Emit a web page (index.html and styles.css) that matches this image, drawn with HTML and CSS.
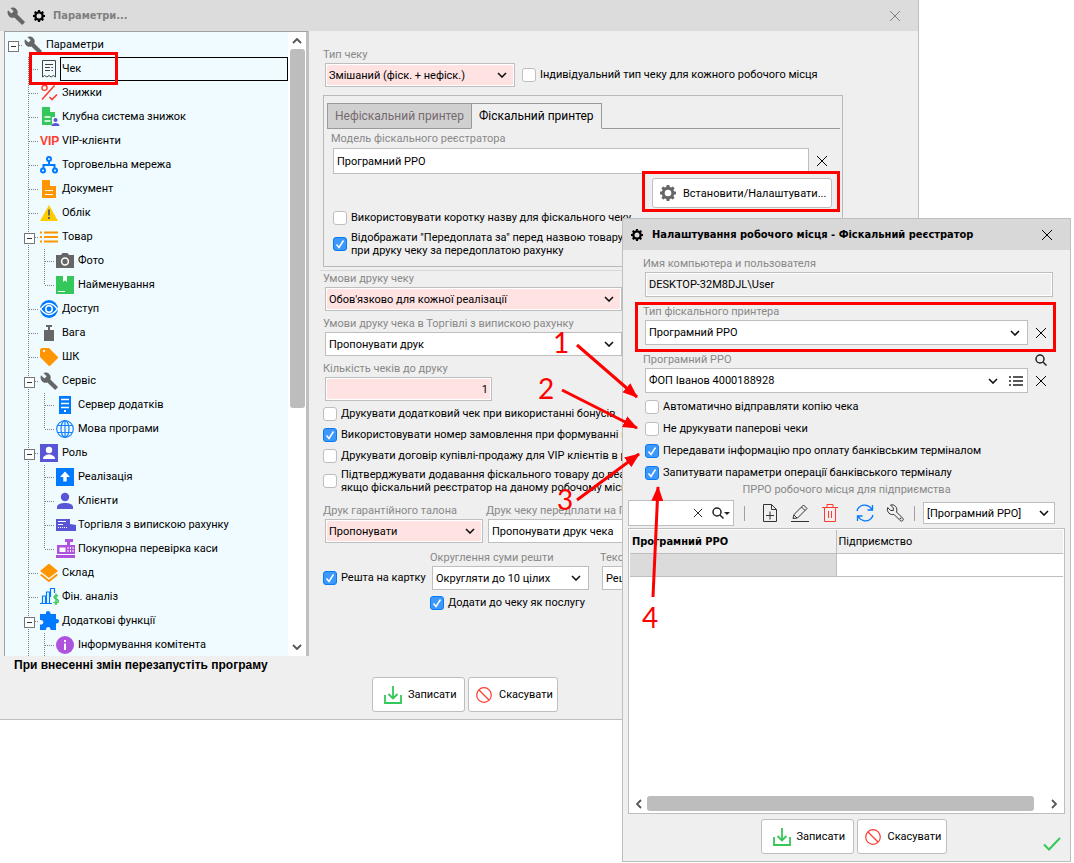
FILE: index.html
```html
<!DOCTYPE html>
<html lang="uk">
<head>
  <meta charset="UTF-8" />
  <title>Параметри</title>
  <meta name="viewport" content="width=device-width, initial-scale=1.0" />
  <link rel="stylesheet" href="styles.css">
</head>
<body>

  <!-- Icon sprite -->
  <svg class="sprite" aria-hidden="true">
    <symbol id="i-wrench" viewBox="0 0 18 18"><path d="M17.5 14.6 10.4 7.5C11.1 5.600 10.700 3.500 9.200 2 7.600.4 5.300.1 3.400 1l3.300 3.300-2.300 2.300L1 3.300C.1 5.200.5 7.600 2 9.200c1.500 1.500 3.600 1.900 5.400 1.200l7.200 7.200c.3.3.8.3 1.100 0l1.800-1.800c.4-.3.4-.9 0-1.200z" fill="#666"/></symbol>
    <symbol id="i-gear" viewBox="0 0 24 24"><path fill-rule="evenodd" d="M10 0h4l.6 3 2 .9L19.200 2.200l2.700 2.700-1.700 2.500.8 2 3 .6v4l-3 .6-.8 2 1.700 2.500-2.700 2.700-2.600-1.700-2 .9-.6 3h-4l-.6-3-2-.9-2.600 1.700-2.700-2.700 1.700-2.500-.8-2-3-.6v-4l3-.6.8-2-1.700-2.500 2.700-2.700 2.600 1.700 2-.9zM12 7a5 5 0 1 0 0 10 5 5 0 0 0 0-10z" fill="currentColor"/></symbol>
    <symbol id="i-close" viewBox="0 0 12 12"><path d="M1 1l10 10M11 1L1 11" stroke="currentColor" fill="none"/></symbol>
    <symbol id="i-up" viewBox="0 0 10 6"><path d="M1 5l4-4 4 4" stroke="#555" stroke-width="1.800" fill="none"/></symbol>
    <symbol id="i-receipt" viewBox="0 0 18 18"><path d="M2.500 17V.5h13V17l-2.200-1.500L11.200 17 9 15.500 6.800 17l-2.200-1.500zM5 4.500h8M5 7.500h5M11.500 7.500H13M5 10.500h5M11.500 10.500H13" stroke="#444" fill="none"/></symbol>
    <symbol id="i-percent" viewBox="0 0 18 18"><path d="M2 15.500 14.500 1.500M9.500 13l2.500 2.500 5-5" stroke="#ff3b30" stroke-width="1.600" fill="none"/><circle cx="4.500" cy="3.800" r="2.600" stroke="#ff3b30" stroke-width="1.400" fill="none"/></symbol>
    <symbol id="i-club" viewBox="0 0 20 20"><path d="M2 0h8v5h5v5h-3v8H2z" fill="#34c759"/><path d="M4.500 10h6M4.500 14h6" stroke="#fff" stroke-width="1.400"/><circle cx="15.500" cy="13" r="2" fill="#5856d6"/><path d="M11.500 19c0-4 8-4 8 0z" fill="#5856d6"/></symbol>
    <symbol id="i-net" viewBox="0 0 18 18"><g fill="none" stroke="#007aff" stroke-width="2"><path d="M9 5v4M3.500 12V9h11v3"/><circle cx="9" cy="3" r="2"/><circle cx="3" cy="14.500" r="2"/><circle cx="15" cy="14.500" r="2"/></g></symbol>
    <symbol id="i-doc" viewBox="0 0 18 18"><path d="M2 0h8v6h6v12H2z" fill="#ff9500"/><path d="M5 10.500h8M5 14.500h8" stroke="#fff" stroke-width="1.200"/></symbol>
    <symbol id="i-warn" viewBox="0 0 18 18"><path d="M9 1l9 16H0z" fill="#fc0"/><path d="M9 5.500v6M9 13v2" stroke="#666" stroke-width="2"/></symbol>
    <symbol id="i-list" viewBox="0 0 18 18"><path d="M0 4.500h2M0 9h2M0 13.500h2M4 4.500h14M4 9h14M4 13.500h14" stroke="#ff9500" stroke-width="2"/></symbol>
    <symbol id="i-camera" viewBox="0 0 18 18"><path d="M0 3h5l1.500-2h5L13 3h5v13H0z" fill="#666"/><circle cx="9" cy="9.500" r="3.400" fill="none" stroke="#fff" stroke-width="1.500"/></symbol>
    <symbol id="i-box" viewBox="0 0 18 18"><path d="M0 0h18v18H0z" fill="#34c759"/><path d="M7 0h4v6L9 4.500 7 6z" fill="#fff"/><path d="M2 15.500h7" stroke="#fff"/></symbol>
    <symbol id="i-eye" viewBox="0 0 18 18"><circle cx="9" cy="9" r="9" fill="#007aff"/><path d="M.5 9Q9-2 17.500 9 9 20 .5 9z" fill="none" stroke="#fff" stroke-width="1.300"/><circle cx="9" cy="9" r="3.200" fill="none" stroke="#fff" stroke-width="1.500"/></symbol>
    <symbol id="i-weight" viewBox="0 0 18 18"><path d="M6 1h6v2h-2v3h4v11H4V6h4V3H6z" fill="#666"/></symbol>
    <symbol id="i-tag" viewBox="0 0 18 18"><path fill-rule="evenodd" d="M1.500 0H9l9 9c.2.4.2.8 0 1l-8 8c-.4.200-.7.200-1 0L0 9V1.500zM3 2v2h2V2z" fill="#ff9500"/></symbol>
    <symbol id="i-server" viewBox="0 0 18 18"><path d="M3 0h12v18H3z" fill="#007aff"/><path d="M5 3.500h8M5 7.500h8M5 11.500h8" stroke="#fff" stroke-width="1.500"/><path d="M8 14h2v2H8z" fill="#fff"/></symbol>
    <symbol id="i-globe" viewBox="0 0 18 18"><g fill="none" stroke="#1583ff" stroke-width="1.200"><circle cx="9" cy="9" r="8.300"/><ellipse cx="9" cy="9" rx="4" ry="8.300"/><path d="M1.500 5.500h15M1.500 12.500h15M9 1v16"/></g></symbol>
    <symbol id="i-role" viewBox="0 0 18 18"><path d="M0 0h18v18H0z" fill="#5856d6"/><circle cx="9" cy="6" r="3.200" fill="#fff"/><path d="M3 15c0-6 12-6 12 0z" fill="#fff"/></symbol>
    <symbol id="i-sale" viewBox="0 0 18 18"><path d="M0 0h18v18H0z" fill="#007aff"/><path d="M9 3.500 4 9h3.300v4.500h3.400V9H14z" fill="#fff"/></symbol>
    <symbol id="i-client" viewBox="0 0 18 18"><circle cx="9" cy="5" r="4.200" fill="#5856d6"/><path d="M1 17v-2c0-5.500 16-5.500 16 0v2z" fill="#5856d6"/></symbol>
    <symbol id="i-invoice" viewBox="0 0 20 18"><path d="M0 3h14v5l6 1v6H0z" fill="#5856d6"/><path d="M2 5.500h8M2 8.500h5" stroke="#fff"/><path d="M2 11.500h10" stroke="#fff" stroke-dasharray="1 1"/></symbol>
    <symbol id="i-cash" viewBox="0 0 20 20"><path d="M9 0h8v3h-3v3h5v9H1V6h10V3H9zM0 16h19v3H0z" fill="#af52de"/><path d="M3.500 8.500h6v4.500h-6z" fill="#fff"/><path d="M12 8v5M14.500 8v5M17 8v5" stroke="#fff" stroke-dasharray="2 1"/></symbol>
    <symbol id="i-layers" viewBox="0 0 18 18"><path d="M9-.5 18 7l-9 7-9-7z" fill="#ff9500"/><path d="M.7 10.500 9 17l8.300-6.500" stroke="#ff9500" stroke-width="2" fill="none"/></symbol>
    <symbol id="i-chart" viewBox="0 0 20 20"><path d="M0 16.500h12M2.500 16V9h3v7M6.500 16V5h3v11M10.500 10V1.500h4V6" stroke="#007aff" fill="none" stroke-width="1.200"/><path d="M18 9.200c-1-1-4-1-4 1s4.500 1.600 4.500 3.800-3.500 2.400-5 1M16 6.500v11.500" stroke="#34c759" fill="none" stroke-width="1.400"/></symbol>
    <symbol id="i-puzzle" viewBox="0 0 20 20"><path d="M0 3h6c-1-4 5-4 4.500 0H16v5c4-.5 4 4.500 0 4.500V19h-5.500c.5-4-5-4-4.500 0H0v-5.500c4.500 1 4.500-5.500 0-4.500z" fill="#007aff"/></symbol>
    <symbol id="i-info" viewBox="0 0 18 18"><circle cx="9" cy="9" r="9" fill="#af52de"/><path d="M9 4v2M9 7.500V14" stroke="#fff" stroke-width="2"/></symbol>
    <symbol id="i-save" viewBox="0 0 18 18"><path d="M1 9v8h16V9M9 0v12M4.500 8 9 12.500 13.500 8" stroke="#34c759" stroke-width="1.800" fill="none"/></symbol>
    <symbol id="i-cancel" viewBox="0 0 16 16"><circle cx="8" cy="8" r="7.300" fill="none" stroke="#ff3b30" stroke-width="1.200"/><path d="M3 3l10 10" stroke="#ff3b30" stroke-width="1.200"/></symbol>
    <symbol id="i-search" viewBox="0 0 12 12"><circle cx="5" cy="5" r="4" fill="none" stroke="#222" stroke-width="1.500"/><path d="M8 8l3.500 3.500" stroke="#222" stroke-width="1.500"/></symbol>
    <symbol id="i-bullets" viewBox="0 0 14 10"><path d="M0 1h2M0 5h2M0 9h2M4 1h10M4 5h10M4 9h10" stroke="#222" stroke-width="1.500"/></symbol>
    <symbol id="i-add" viewBox="0 0 18 18"><path d="M2.500.5h8l5 5v12h-13zM10.500.5v5h5M5 11.500h8M9 7.500v8" stroke="#333" fill="none"/></symbol>
    <symbol id="i-edit" viewBox="0 0 18 18"><path d="M0 17.500h18M2 14.500l1-4L12.500 1 16 4.500 6.500 14zM10.500 3 14 6.500M3 11l3 3" stroke="#333" fill="none"/></symbol>
    <symbol id="i-trash" viewBox="0 0 18 18"><path d="M1 3.500h16M6 3V.5h6V3M3.500 4v13.500h11V4M7.500 7v7M10.500 7v7" stroke="#ff3b30" fill="none"/></symbol>
    <symbol id="i-sync" viewBox="0 0 18 18"><path d="M1 7C2 2.500 6 .7 9.500 1.200c3 .5 5 2 6.500 4.300M16.500 1v5h-5M17 11c-1 4.500-5 6.300-8.500 5.800-3-.5-5-2-6.500-4.300M1.500 17v-5h5" stroke="#007aff" stroke-width="1.300" fill="none"/></symbol>
    <symbol id="i-tool" viewBox="0 0 18 18"><path d="M16.800 14.300 10.500 8c.8-2 .3-4.300-1-5.700C8 .9 6.300.5 4.500 1l2.800 2.900v2.600H4.700L1.700 3.600C.9 5.600 1.500 7.800 3 9.200c1.500 1.500 3.500 1.600 5 1.200l6.300 6.300c1.600 1.300 3.900-.8 2.500-2.400z" stroke="#333" fill="none"/><circle cx="14.500" cy="14.500" r=".8" fill="#333"/></symbol>
    <symbol id="i-check" viewBox="0 0 18 14"><path d="M1 7.500l5 5L17 1" stroke="#34c759" stroke-width="2" fill="none"/></symbol>
  </svg>

  <div class="desktop">

    <!-- Main settings window -->
    <section class="window main-window">
      <header class="titlebar inactive">
        <svg class="ico18"><use href="#i-wrench"/></svg>
        <svg class="ico12"><use href="#i-gear"/></svg>
        <h1>Параметри...</h1>
        <button class="plain close" aria-label="Закрити"><svg class="ico12"><use href="#i-close"/></svg></button>
      </header>

      <div class="columns">
        <nav class="tree">
          <ul class="root">
            <li>
              <div class="row open"><svg class="ico18"><use href="#i-wrench"/></svg><span>Параметри</span></div>
              <ul>
                <li><div class="row selected"><svg class="ico18"><use href="#i-receipt"/></svg><span>Чек</span></div></li>
                <li><div class="row"><svg class="ico18"><use href="#i-percent"/></svg><span>Знижки</span></div></li>
                <li><div class="row"><svg class="ico20"><use href="#i-club"/></svg><span>Клубна система знижок</span></div></li>
                <li><div class="row"><b class="vip">VIP</b><span>VIP-клієнти</span></div></li>
                <li><div class="row"><svg class="ico18"><use href="#i-net"/></svg><span>Торговельна мережа</span></div></li>
                <li><div class="row"><svg class="ico18"><use href="#i-doc"/></svg><span>Документ</span></div></li>
                <li><div class="row"><svg class="ico18"><use href="#i-warn"/></svg><span>Облік</span></div></li>
                <li>
                  <div class="row open"><svg class="ico18"><use href="#i-list"/></svg><span>Товар</span></div>
                  <ul>
                    <li><div class="row"><svg class="ico18"><use href="#i-camera"/></svg><span>Фото</span></div></li>
                    <li><div class="row"><svg class="ico18"><use href="#i-box"/></svg><span>Найменування</span></div></li>
                  </ul>
                </li>
                <li><div class="row"><svg class="ico18"><use href="#i-eye"/></svg><span>Доступ</span></div></li>
                <li><div class="row"><svg class="ico18"><use href="#i-weight"/></svg><span>Вага</span></div></li>
                <li><div class="row"><svg class="ico18"><use href="#i-tag"/></svg><span>ШК</span></div></li>
                <li>
                  <div class="row open"><svg class="ico18"><use href="#i-wrench"/></svg><span>Сервіс</span></div>
                  <ul>
                    <li><div class="row"><svg class="ico18"><use href="#i-server"/></svg><span>Сервер додатків</span></div></li>
                    <li><div class="row"><svg class="ico18"><use href="#i-globe"/></svg><span>Мова програми</span></div></li>
                  </ul>
                </li>
                <li>
                  <div class="row open"><svg class="ico18"><use href="#i-role"/></svg><span>Роль</span></div>
                  <ul>
                    <li><div class="row"><svg class="ico18"><use href="#i-sale"/></svg><span>Реалізація</span></div></li>
                    <li><div class="row"><svg class="ico18"><use href="#i-client"/></svg><span>Клієнти</span></div></li>
                    <li><div class="row"><svg class="ico20"><use href="#i-invoice"/></svg><span>Торгівля з випискою рахунку</span></div></li>
                    <li><div class="row"><svg class="ico20"><use href="#i-cash"/></svg><span>Покупюрна перевірка каси</span></div></li>
                  </ul>
                </li>
                <li><div class="row"><svg class="ico18"><use href="#i-layers"/></svg><span>Склад</span></div></li>
                <li><div class="row"><svg class="ico20"><use href="#i-chart"/></svg><span>Фін. аналіз</span></div></li>
                <li class="more">
                  <div class="row open"><svg class="ico20"><use href="#i-puzzle"/></svg><span>Додаткові функції</span></div>
                  <ul>
                    <li class="more"><div class="row"><svg class="ico18"><use href="#i-info"/></svg><span>Інформування комітента</span></div></li>
                  </ul>
                </li>
              </ul>
            </li>
          </ul>
          <div class="vscroll">
            <svg class="arrow"><use href="#i-up"/></svg>
            <div class="thumb"></div>
            <svg class="arrow down"><use href="#i-up"/></svg>
          </div>
        </nav>

        <form class="settings">
          <div class="line">
            <div class="field w-type">
              <label for="type">Тип чеку</label>
              <select id="type" class="pink"><option>Змішаний (фіск. + нефіск.)</option></select>
            </div>
            <label class="check"><input type="checkbox">Індивідуальний тип чеку для кожного робочого місця</label>
          </div>

          <div class="group">
            <div class="tabs">
              <button type="button" class="tab">Нефіскальний принтер</button>
              <button type="button" class="tab active">Фіскальний принтер</button>
            </div>
            <div class="field">
              <label for="model">Модель фіскального реєстратора</label>
              <div class="with-clear">
                <input type="text" id="model" value="Програмний РРО">
                <button type="button" class="plain" aria-label="Очистити"><svg class="ico12"><use href="#i-close"/></svg></button>
              </div>
            </div>
            <button type="button" class="btn setup"><svg class="ico16"><use href="#i-gear"/></svg>Встановити/Налаштувати...</button>
            <label class="check"><input type="checkbox">Використовувати коротку назву для фіскального чеку</label>
            <label class="check two"><input type="checkbox" checked><span>Відображати "Передоплата за" перед назвою товару<br>при друку чеку за передоплатою рахунку</span></label>
          </div>

          <hr>

          <div class="stack">
            <div class="field w-cond">
              <label for="cond">Умови друку чеку</label>
              <select id="cond" class="pink"><option>Обов'язково для кожної реалізації</option></select>
            </div>
            <div class="field w-cond">
              <label for="cond2">Умови друку чека в Торгівлі з випискою рахунку</label>
              <select id="cond2"><option>Пропонувати друк</option></select>
            </div>
            <div class="field w-count">
              <label for="count">Кількість чеків до друку</label>
              <input type="text" id="count" class="pink num" value="1">
            </div>
          </div>

          <div class="checks">
            <label class="check"><input type="checkbox">Друкувати додатковий чек при використанні бонусів</label>
            <label class="check"><input type="checkbox" checked>Використовувати номер замовлення при формуванні штрихкоду</label>
            <label class="check"><input type="checkbox">Друкувати договір купівлі-продажу для VIP клієнтів в роздріб</label>
            <label class="check two"><input type="checkbox"><span>Підтверджувати додавання фіскального товару до реалізації,<br>якщо фіскальний реєстратор на даному робочому місці</span></label>
          </div>

          <div class="line pair">
            <div class="field w-talon">
              <label for="talon">Друк гарантійного талона</label>
              <select id="talon" class="pink"><option>Пропонувати</option></select>
            </div>
            <div class="field w-prepay">
              <label for="prepay">Друк чеку передплати на ПРРО</label>
              <select id="prepay"><option>Пропонувати друк чека</option></select>
            </div>
          </div>

          <div class="line change">
            <label class="check"><input type="checkbox" checked>Решта на картку</label>
            <div class="field w-round">
              <label for="round">Округлення суми решти</label>
              <select id="round"><option>Округляти до 10 цілих</option></select>
            </div>
            <div class="field w-text">
              <label for="text">Текст решти</label>
              <input type="text" id="text" value="Решта">
            </div>
          </div>
          <label class="check service"><input type="checkbox" checked>Додати до чеку як послугу</label>
        </form>
      </div>

      <p class="note">При внесенні змін перезапустіть програму</p>
      <footer class="actions">
        <button class="btn save"><svg class="ico18"><use href="#i-save"/></svg>Записати</button>
        <button class="btn cancel"><svg class="ico16"><use href="#i-cancel"/></svg>Скасувати</button>
      </footer>
    </section>

    <!-- Workplace dialog -->
    <section class="window dialog">
      <header class="titlebar">
        <svg class="ico12"><use href="#i-gear"/></svg>
        <h2>Налаштування робочого місця - Фіскальний реєстратор</h2>
        <button class="plain close" aria-label="Закрити"><svg class="ico12"><use href="#i-close"/></svg></button>
      </header>

      <form class="workplace">
        <div class="field">
          <label for="host">Имя компьютера и пользователя</label>
          <input type="text" id="host" class="readonly" value="DESKTOP-32M8DJL\User" readonly>
        </div>
        <div class="field">
          <label for="kind">Тип фіскального принтера</label>
          <div class="with-clear">
            <select id="kind"><option>Програмний РРО</option></select>
            <button type="button" class="plain" aria-label="Очистити"><svg class="ico12"><use href="#i-close"/></svg></button>
          </div>
        </div>
        <div class="field">
          <div class="label-line">
            <label for="prro">Програмний РРО</label>
            <button type="button" class="plain" aria-label="Пошук"><svg class="ico12"><use href="#i-search"/></svg></button>
          </div>
          <div class="with-clear">
            <div class="combo">
              <select id="prro"><option>ФОП Іванов 4000188928</option></select>
              <button type="button" class="plain" aria-label="Список"><svg class="bullets"><use href="#i-bullets"/></svg></button>
            </div>
            <button type="button" class="plain" aria-label="Очистити"><svg class="ico12"><use href="#i-close"/></svg></button>
          </div>
        </div>
        <div class="checks">
          <label class="check"><input type="checkbox">Автоматично відправляти копію чека</label>
          <label class="check"><input type="checkbox">Не друкувати паперові чеки</label>
          <label class="check"><input type="checkbox" checked>Передавати інформацію про оплату банківським терміналом</label>
          <label class="check"><input type="checkbox" checked>Запитувати параметри операції банківського терміналу</label>
        </div>
      </form>

      <p class="caption">ПРРО робочого місця для підприємства</p>

      <div class="toolbar">
        <div class="search">
          <input type="text" aria-label="Пошук">
          <button class="plain" aria-label="Очистити"><svg class="ico10"><use href="#i-close"/></svg></button>
          <button class="plain" aria-label="Знайти"><svg class="ico12"><use href="#i-search"/></svg><i class="caret"></i></button>
        </div>
        <i class="sep"></i>
        <div class="tools">
          <button class="plain" aria-label="Додати"><svg class="ico18"><use href="#i-add"/></svg></button>
          <button class="plain" aria-label="Редагувати"><svg class="ico18"><use href="#i-edit"/></svg></button>
          <button class="plain" aria-label="Видалити"><svg class="ico18"><use href="#i-trash"/></svg></button>
          <button class="plain refresh" aria-label="Оновити"><svg class="ico18"><use href="#i-sync"/></svg></button>
          <button class="plain" aria-label="Інструменти"><svg class="ico18"><use href="#i-tool"/></svg></button>
        </div>
        <i class="sep"></i>
        <select aria-label="Фільтр"><option>[Програмний РРО]</option></select>
      </div>

      <div class="grid">
        <table>
          <thead>
            <tr><th class="sorted">Програмний РРО</th><th>Підприємство</th></tr>
          </thead>
          <tbody>
            <tr><td class="current"></td><td></td></tr>
          </tbody>
        </table>
        <div class="hscroll">
          <svg class="arrow left"><use href="#i-up"/></svg>
          <div class="thumb"></div>
          <svg class="arrow right"><use href="#i-up"/></svg>
        </div>
      </div>

      <footer class="actions">
        <button class="btn save"><svg class="ico18"><use href="#i-save"/></svg>Записати</button>
        <button class="btn cancel"><svg class="ico16"><use href="#i-cancel"/></svg>Скасувати</button>
        <svg class="ok"><use href="#i-check"/></svg>
      </footer>
    </section>

    <!-- Red frames, arrows and step numbers over both windows -->
    <svg class="marks" aria-hidden="true">
      <defs>
        <marker id="head" markerUnits="userSpaceOnUse" markerWidth="16" markerHeight="12" refX="14" refY="6" orient="auto"><path d="M0 0l15 6-15 6z" fill="red"/></marker>
      </defs>
      <g fill="none" stroke="red" stroke-width="3">
        <rect x="30.500" y="53.500" width="86" height="30"/>
        <rect x="643.500" y="172.500" width="195" height="38"/>
        <rect x="636.500" y="303.500" width="418" height="47"/>
        <path marker-end="url(#head)" d="M577 345l60 52"/>
        <path marker-end="url(#head)" d="M562 390l75 38"/>
        <path marker-end="url(#head)" d="M577 500l62-46"/>
        <path marker-end="url(#head)" d="M653 597l5-110"/>
      </g>
      <g class="steps">
        <text x="553" y="353">1</text>
        <text x="538" y="399">2</text>
        <text x="557" y="510">3</text>
        <text x="642" y="628">4</text>
      </g>
    </svg>
  </div>

</body>
</html>
```
FILE: styles.css
```css
* {
  box-sizing: border-box;
}

body {
  margin: 0;
  background: #fff;
  color: #000;
  font-family: Roboto, Tahoma, sans-serif;
  font-size: 11px;
  line-height: 13px;
}

input,
select,
button {
  font: inherit;
  color: inherit;
}

h1,
h2,
p,
ul {
  margin: 0;
  padding: 0;
}

svg {
  display: block;
  flex: none;
}

.sprite {
  position: absolute;
  width: 0;
  height: 0;
}

.ico10 { width: 10px; height: 10px; }
.ico12 { width: 12px; height: 12px; }
.ico16 { width: 16px; height: 16px; }
.ico18 { width: 18px; height: 18px; }
.ico20 { width: 20px; height: 20px; }

.desktop {
  position: relative;
  min-height: 100vh;
}

/* windows */
.window {
  background: #efefef;
  border: 1px solid #bebebe;
}

.main-window {
  margin-right: 155px;
  border-width: 0 1px 1px 0;
}

.dialog {
  position: absolute;
  left: 622px;
  right: 3px;
  top: 218px;
  bottom: 1px;
  display: flex;
  flex-direction: column;
}

.titlebar {
  display: flex;
  align-items: center;
  gap: 9px;
  height: 31px;
  padding: 0 17px 0 8px;
  background: #d8d8d8;
}

.titlebar.inactive {
  gap: 8px;
  padding-left: 7px;
  background: #dcdcdc;
}

.titlebar h1,
.titlebar h2 {
  flex: 1;
  font-family: "DejaVu Sans Condensed", Tahoma, sans-serif;
  font-size: 11px;
  font-weight: bold;
}

.inactive h1,
.inactive .close {
  color: #808080;
}

.plain {
  display: flex;
  align-items: center;
  padding: 0;
  border: 0;
  background: none;
}

/* tree */
.columns {
  display: flex;
}

.tree {
  display: flex;
  width: 305px;
  height: 625px;
  margin-left: 4px;
  border-left: 1px solid #a0a0a0;
  border-top: 1px solid #a0a0a0;
  border-right: 3px solid #c0c0c0;
  background: #effbff;
}

.tree ul {
  list-style: none;
}

.tree .root {
  flex: 1;
  padding-top: 1px;
  overflow: hidden;
}

.tree ul ul {
  padding-left: 16px;
}

.tree li {
  position: relative;
}

/* dotted branch lines */
.tree ul ul > li::before {
  content: "";
  position: absolute;
  left: 7px;
  top: 0;
  bottom: 0;
  width: 1px;
  background: repeating-linear-gradient(#808080 0 1px, transparent 1px 2px);
}

.tree ul ul > li:last-child:not(.more)::before {
  bottom: 12px;
}

.row {
  position: relative;
  display: flex;
  align-items: center;
  height: 24px;
  padding-left: 19px;
  white-space: nowrap;
}

.row::before {
  content: "";
  position: absolute;
  left: 8px;
  top: 12px;
  width: 9px;
  height: 1px;
  background: repeating-linear-gradient(90deg, #808080 0 1px, transparent 1px 2px);
}

.row.open::after {
  content: "";
  position: absolute;
  left: 3px;
  top: 8px;
  width: 9px;
  height: 9px;
  border: 1px solid #777;
  background: linear-gradient(#333, #333) center / 5px 1px no-repeat #fff;
}

.row > span {
  flex: 1;
  height: 24px;
  margin-left: 3px;
  padding-left: 1px;
  line-height: 24px;
}

.row > .ico20 + span,
.row > .vip + span {
  margin-left: 1px;
}

.row.selected > span {
  margin-left: 2px;
  border: 1px solid #000;
  line-height: 22px;
}

.vip {
  width: 20px;
  color: #ff3b30;
  font-family: "Liberation Sans", sans-serif;
  font-size: 12px;
}

.vscroll {
  display: flex;
  flex-direction: column;
  align-items: center;
  width: 18px;
  padding: 6px 0;
  background: #fff;
}

.arrow {
  width: 10px;
  height: 6px;
}

.arrow.down { margin-top: auto; transform: rotate(180deg); }
.arrow.left { transform: rotate(-90deg); }
.arrow.right { margin-left: auto; transform: rotate(90deg); }

.thumb {
  border-radius: 3px;
  background: #bdbdbd;
}

.vscroll .thumb {
  width: 15px;
  height: 359px;
  margin-top: 5px;
}

/* fields */
.field {
  display: flex;
  flex-direction: column;
  gap: 1px;
}

.field label,
.caption {
  color: #888;
  line-height: 14px;
  white-space: nowrap;
}

input[type="text"],
select {
  width: 100%;
  min-width: 0;
  height: 24px;
  padding: 0 3px;
  border: 1px solid #bebebe;
  border-radius: 0;
  background-color: #fff;
  outline: none;
}

select {
  appearance: none;
  background: #fff url("data:image/svg+xml,%3Csvg xmlns='http://www.w3.org/2000/svg' width='10' height='6'%3E%3Cpath d='M1 1l4 4 4-4' fill='none' stroke='%23111' stroke-width='1.600'/%3E%3C/svg%3E") no-repeat right 7px center;
}

select.pink,
input.pink[type="text"] {
  background-color: #ffe3e3;
  box-shadow: inset 0 0 0 1px #fff;
}

.readonly[type="text"] {
  background: #efefef;
  box-shadow: inset 0 0 0 1px #fff;
}

.num {
  text-align: right;
}

.check {
  display: flex;
  align-items: center;
  gap: 4px;
  line-height: 14px;
  white-space: nowrap;
}

.check.two {
  line-height: 13px;
}

.check input {
  appearance: none;
  flex: none;
  width: 14px;
  height: 14px;
  margin: 0;
  border: 1px solid #bebebe;
  border-radius: 3px;
  background: #fff;
}

.check input:checked {
  border-color: #087bf5;
  background: #3d98fc url("data:image/svg+xml,%3Csvg xmlns='http://www.w3.org/2000/svg' width='10' height='10'%3E%3Cpath d='M1.500 5.500l2.500 3 4.500-7' fill='none' stroke='%23fff' stroke-width='1.500'/%3E%3C/svg%3E") no-repeat center;
}

.checks {
  display: flex;
  flex-direction: column;
  align-items: flex-start;
}

.btn {
  display: flex;
  align-items: center;
  border: 1px solid #bebebe;
  border-radius: 3px;
  background: #fff;
  white-space: nowrap;
}

/* settings panel */
.settings {
  flex: 1;
  min-width: 0;
  padding: 17px 16px 0 13px;
}

.settings .field > label {
  margin-left: 1px;
}

.settings .field > select,
.settings .field > input {
  margin-left: 3px;
}

.line {
  display: flex;
  align-items: flex-end;
}

.line > .check {
  height: 24px;
}

.w-type { width: 190px; margin-right: 10px; }
.w-cond { width: 297px; }
.w-count { width: 167px; }
.w-talon { width: 158px; }
.w-prepay { width: 190px; }
.w-round { width: 157px; }
.w-text { width: 200px; }

.field > select,
.field > input {
  align-self: flex-start;
}

.group {
  max-width: 520px;
  margin: 8px 0 3px 1px;
  padding: 7px 2px 9px 3px;
  border: 1px solid #b9b9b9;
}

.tabs {
  display: flex;
  height: 26px;
  border-bottom: 1px solid #999;
}

.tab {
  height: 26px;
  padding: 0 7px;
  border: 1px solid #999;
  background: #d0d0d0;
  color: #776a6e;
  font-size: 12px;
}

.tab.active {
  margin-left: -1px;
  border-bottom-color: #efefef;
  background: #efefef;
  color: #000;
}

.group .field {
  gap: 2px;
  margin-top: 3px;
}

.group .field > label {
  margin-left: 4px;
}

.with-clear {
  display: flex;
  gap: 7px;
}

.group .with-clear {
  padding: 0 12px 0 6px;
}

.group .with-clear input {
  height: 26px;
}

.btn.setup {
  gap: 7px;
  height: 30px;
  width: 180px;
  margin: 4px 8px 3px auto;
  padding: 0 4px 0 7px;
}

.setup svg {
  color: #666;
}

.group .check {
  margin-left: 6px;
}

.group .check.two {
  margin-top: 6px;
}

hr {
  height: 1px;
  margin: 0 0 1px -2px;
  border: 0;
  background: #d8d8d8;
}

.stack {
  display: flex;
  flex-direction: column;
  gap: 6px;
}

.settings .checks {
  gap: 7px;
  margin: 6px 0 0 1px;
}

.settings .checks .two {
  margin-top: -2px;
}

.pair {
  gap: 5px;
  margin-top: 10px;
}

.change {
  margin: 8px 0 6px 1px;
}

.change > .check {
  width: 104px;
}

.change .w-round {
  margin: 0 13px 0 2px;
}

.service {
  margin-left: 108px;
}

.note {
  margin: 2px 0 0 14px;
  font-family: "Liberation Sans", sans-serif;
  font-weight: bold;
  font-size: 12px;
  line-height: 14px;
}

.actions {
  position: relative;
  display: flex;
  justify-content: center;
  gap: 3px;
  padding: 5px 0 7px 12px;
}

.actions .btn {
  height: 35px;
}

.save {
  gap: 6px;
  width: 93px;
  padding: 0 0 0 11px;
}

.cancel {
  gap: 7px;
  width: 90px;
  padding: 0 0 0 7px;
}

/* dialog */
.workplace {
  display: flex;
  flex-direction: column;
  gap: 8px;
  padding: 7px 17px 0 20px;
}

.workplace .field > input {
  margin-left: 2px;
}

.workplace .field > input,
.workplace .with-clear {
  width: calc(100% - 2px);
}

.workplace .with-clear {
  margin-left: 2px;
  padding-right: 6px;
}

.workplace input[type="text"],
.workplace select {
  height: 25px;
}

.label-line {
  display: flex;
  justify-content: space-between;
  padding-right: 6px;
}

.combo {
  position: relative;
  flex: 1;
}

.combo select {
  background-position: right 29px center;
}

/* list button sits over the right end of the drop-down */
.combo .plain {
  position: absolute;
  right: 5px;
  top: 0;
  height: 100%;
}

.bullets {
  width: 14px;
  height: 10px;
}

.workplace .checks {
  gap: 8px;
  margin: -1px 0 0 2px;
}

.caption {
  margin: 3px 0;
  text-align: center;
}

.toolbar {
  display: flex;
  align-items: center;
  padding: 0 15px 2px 5px;
}

.search {
  display: flex;
  gap: 9px;
  flex: none;
  width: 106px;
  height: 26px;
  padding-right: 3px;
  border: 1px solid #bebebe;
  background: #fff;
}

.search input[type="text"] {
  border: 0;
}

.caret {
  border: 3px solid transparent;
  border-top-color: #222;
  border-bottom: 0;
}

.sep {
  flex: none;
  width: 1px;
  height: 15px;
  margin: 0 8px 0 10px;
  background: #a0a0a0;
}

.tools {
  display: flex;
  flex: 1;
  gap: 12px;
  padding-left: 8px;
}

.tools .refresh {
  margin-left: 5px;
}

.toolbar > select {
  width: 134px;
  height: 22px;
  background-position: right 5px center;
}

.grid {
  display: flex;
  flex: 1;
  flex-direction: column;
  justify-content: space-between;
  margin: 0 5px;
  padding: 1px;
  border: 1px solid #bebebe;
  background: #fff;
}

table {
  width: 100%;
  border-collapse: collapse;
  table-layout: fixed;
}

th,
td {
  height: 23px;
  padding: 0 2px;
  border-bottom: 1px solid #bebebe;
  font-weight: normal;
  text-align: left;
}

th {
  background: #efefef;
}

th:first-child,
td:first-child {
  width: 206px;
  border-right: 1px solid #bebebe;
}

.sorted {
  font-family: "DejaVu Sans Condensed", Tahoma, sans-serif;
  font-weight: bold;
}

.current {
  background: #dbdbdb;
}

.hscroll {
  display: flex;
  align-items: center;
  padding: 1px 4px;
}

.hscroll .thumb {
  width: 91%;
  height: 15px;
  margin-left: 3px;
}

.dialog .actions {
  padding-left: 14px;
}

.ok {
  position: absolute;
  right: 9px;
  bottom: 10px;
  width: 18px;
  height: 14px;
}

/* step marks */
.marks {
  position: absolute;
  left: 0;
  top: 0;
  width: 100%;
  height: 100%;
  pointer-events: none;
}

.steps {
  fill: red;
  font-family: Lato, sans-serif;
  font-size: 28px;
}
```
